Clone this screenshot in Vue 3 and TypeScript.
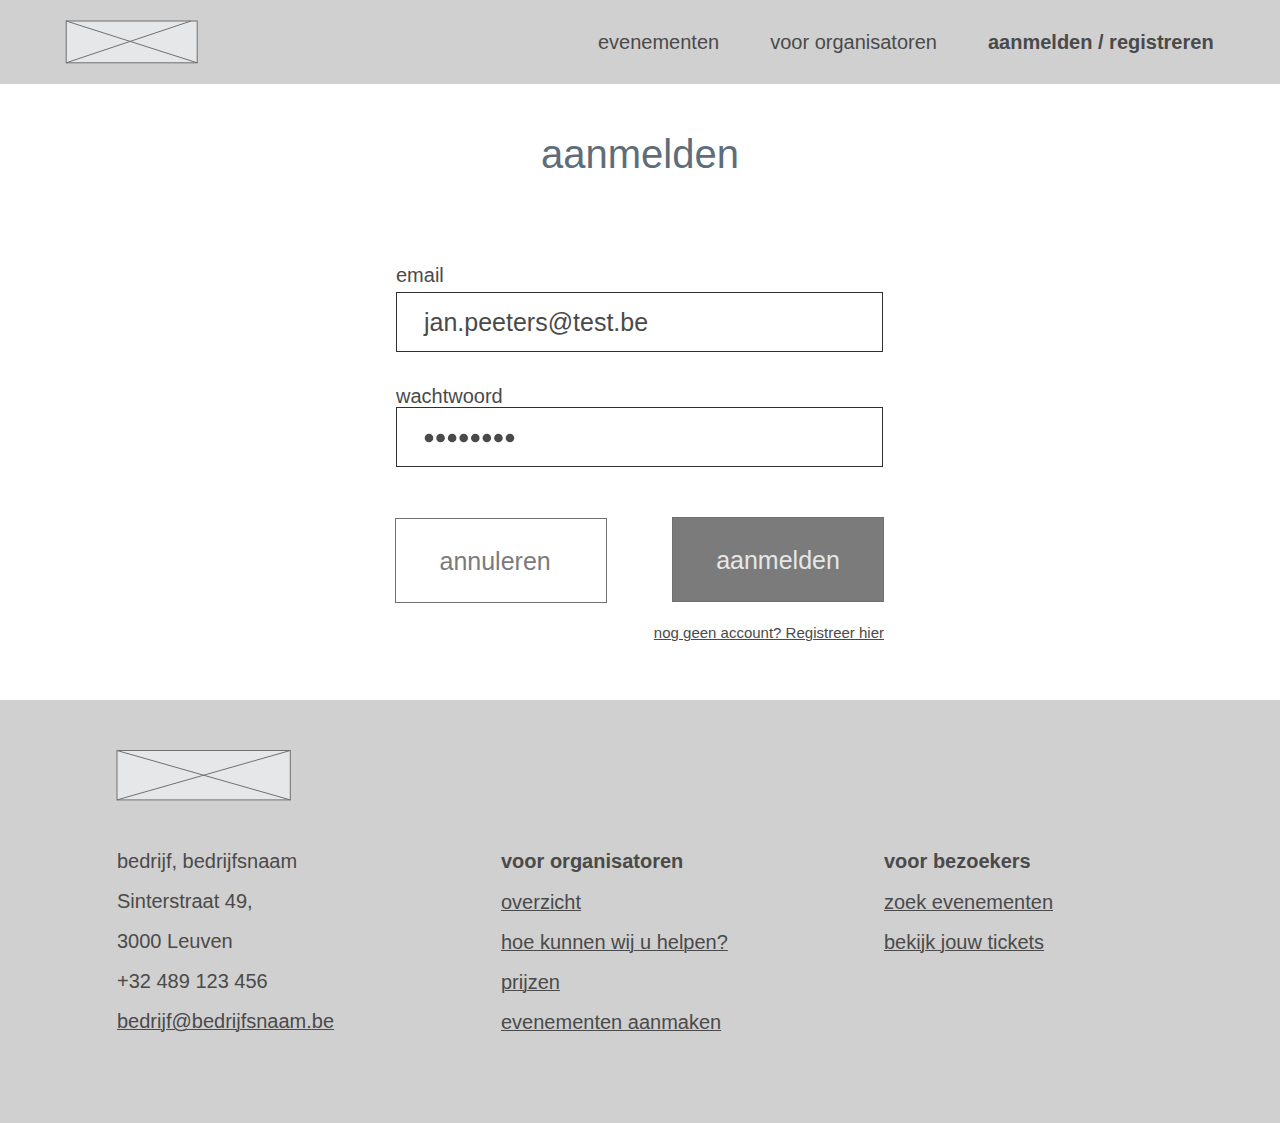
<script setup lang="ts">
import { ref } from 'vue'

const email = ref('jan.peeters@test.be')
const passwordLength = 8
const address: string[] = ['bedrijf, bedrijfsnaam', 'Sinterstraat 49,', '3000 Leuven', '+32 489 123 456']
const organisers: string[] = ['overzicht', 'hoe kunnen wij u helpen?', 'prijzen', 'evenementen aanmaken']
const visitors: string[] = ['zoek evenementen', 'bekijk jouw tickets']
</script>

<template>
  <div class="page">
    <header class="top">
      <svg class="logo" width="133" height="44" viewBox="0 0 133 44">
        <rect x="1.2" y="1" width="131" height="41.8" />
        <path d="M1.2 1L132.2 42.8M1.2 42.8L126 1" />
      </svg>
      <nav class="nav">
        <a>evenementen</a>
        <a>voor organisatoren</a>
        <a class="active">aanmelden / registreren</a>
      </nav>
    </header>

    <main class="main">
      <h1>aanmelden</h1>
      <form class="form" @submit.prevent>
        <label class="label">email</label>
        <div class="field">{{ email }}</div>
        <label class="label second">wachtwoord</label>
        <div class="field">
          <svg class="dots" width="92" height="10" viewBox="0 0 92 10">
            <circle v-for="n in passwordLength" :key="n" :cx="5 + (n - 1) * 11.57" cy="5" r="4.3" />
          </svg>
        </div>
        <div class="actions">
          <button type="button" class="btn cancel">annuleren</button>
          <button type="submit" class="btn submit">aanmelden</button>
        </div>
        <a class="register">nog geen account? Registreer hier</a>
      </form>
    </main>

    <footer class="footer">
      <svg class="logo" width="175" height="52" viewBox="0 0 175 52">
        <rect x="1" y="1.5" width="173.3" height="49.4" />
        <path d="M1 1.5L174.3 50.9M1 50.9L174.3 1.5" />
      </svg>
      <div class="columns">
        <ul class="address">
          <li v-for="line in address" :key="line">{{ line }}</li>
          <li><a>bedrijf@bedrijfsnaam.be</a></li>
        </ul>
        <ul class="links">
          <li class="heading">voor organisatoren</li>
          <li v-for="item in organisers" :key="item"><a>{{ item }}</a></li>
        </ul>
        <ul class="links">
          <li class="heading">voor bezoekers</li>
          <li v-for="item in visitors" :key="item"><a>{{ item }}</a></li>
        </ul>
      </div>
    </footer>
  </div>
</template>

<style>
body {
  margin: 0;
  background: #fff;
}
</style>

<style scoped>
.page {
  height: 1123px;
  display: flex;
  flex-direction: column;
  overflow: hidden;
  font-family: 'Liberation Sans', Arial, sans-serif;
  font-size: 20px;
  color: #4a4a4a;
}
.logo {
  display: block;
  fill: #e5e7e9;
  stroke: #707070;
  stroke-width: 1;
}
.top {
  box-sizing: border-box;
  height: 84px;
  padding: 0 66.4px 0 65px;
  display: flex;
  align-items: center;
  justify-content: space-between;
  background: #d0d0d0;
}
.nav {
  display: flex;
  gap: 51px;
  line-height: 24px;
}
.active {
  font-weight: 700;
}
.main {
  box-sizing: border-box;
  height: 616px;
  padding-top: 46px;
}
h1 {
  margin: 0;
  font-size: 40px;
  line-height: 48px;
  font-weight: 400;
  text-align: center;
  color: #5f6d7a;
}
.form {
  width: 488px;
  margin: 85px auto 0;
  display: flex;
  flex-direction: column;
}
.label {
  line-height: 24px;
  margin-bottom: 5px;
}
.label.second {
  margin: 32px 0 -1px;
}
.field {
  box-sizing: border-box;
  width: 487px;
  height: 60px;
  border: 1px solid #303030;
  padding-left: 27px;
  display: flex;
  align-items: center;
  font-size: 25px;
  line-height: 58px;
}
.dots {
  margin: 2px 0 0;
  fill: #4a4a4a;
}
.actions {
  display: flex;
  justify-content: space-between;
  margin-top: 50px;
}
.btn {
  box-sizing: border-box;
  width: 212px;
  height: 85px;
  padding: 1px 0 0;
  border: 1px solid #707070;
  font-family: inherit;
  font-size: 25px;
}
.cancel {
  margin: 1px 0 0 -0.6px;
  padding-right: 12.6px;
  background: #fff;
  color: #7b7b7b;
}
.submit {
  background: #7b7b7b;
  color: #e5e7e9;
}
.register {
  align-self: flex-end;
  margin-top: 20px;
  font-size: 15px;
  line-height: 20px;
  text-decoration: underline;
  text-decoration-thickness: 1px;
}
.footer {
  flex: 1;
  padding: 49px 0 0 116px;
  background: #d0d0d0;
}
.columns {
  display: grid;
  grid-template-columns: 384px 383px 300px;
  margin: 40px 0 0 1px;
}
ul {
  margin: 0;
  padding: 0;
  list-style: none;
}
li {
  line-height: 40px;
}
.heading {
  font-weight: 700;
  margin-bottom: 1px;
}
li a {
  text-decoration: underline;
  text-decoration-thickness: 1px;
}
</style>
